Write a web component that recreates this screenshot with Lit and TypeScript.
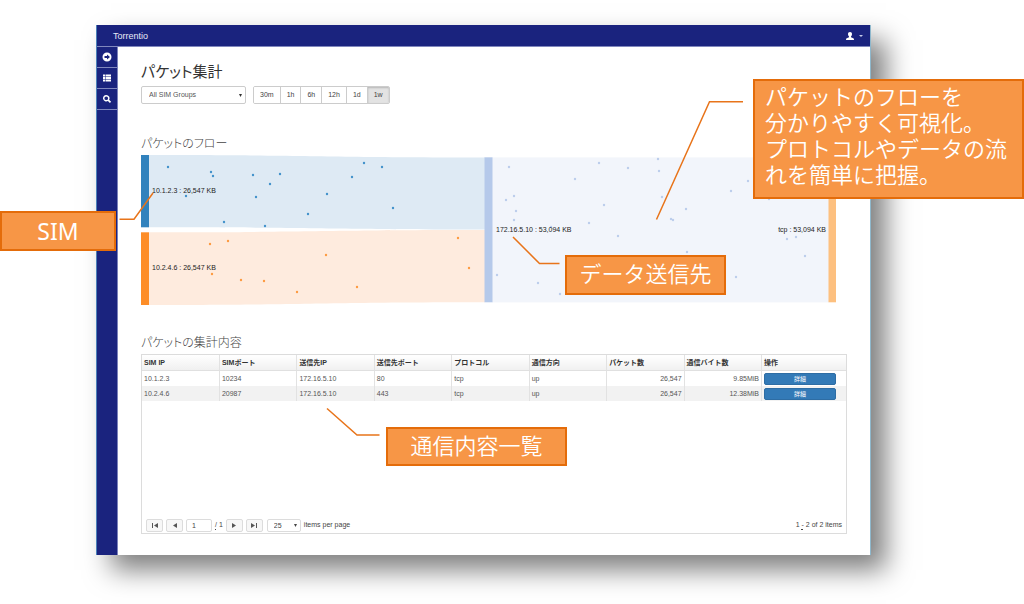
import { LitElement, html, svg, css } from "lit";
import { customElement, state } from "lit/decorators.js";

type Point = [number, number];

const PERIODS = ["30m", "1h", "6h", "12h", "1d", "1w"];

const COLUMNS = ["SIM IP", "SIMポート", "送信先IP", "送信先ポート", "プロトコル", "通信方向", "パケット数", "通信バイト数", "操作"];

const ROWS = [
  ["10.1.2.3", "10234", "172.16.5.10", "80", "tcp", "up", "26,547", "9.85MiB"],
  ["10.2.4.6", "20987", "172.16.5.10", "443", "tcp", "up", "26,547", "12.38MiB"],
];

const BLUE_PACKETS: Point[] = [
  [27, 12], [70, 17], [72, 21], [112, 20], [139, 19], [129, 29], [115, 42], [45, 41],
  [83, 67], [124, 71], [167, 59], [186, 39], [211, 22], [223, 8], [241, 12], [252, 53],
];
const ORANGE_PACKETS: Point[] = [
  [69, 89], [87, 86], [71, 119], [100, 125], [123, 126], [156, 137], [185, 100], [216, 132], [317, 83], [328, 113],
];
const TCP_PACKETS: Point[] = [
  [368, 12], [458, 8], [487, 13], [517, 4], [518, 16], [434, 24], [373, 41], [365, 45], [521, 42], [463, 50],
  [375, 56], [545, 54], [373, 65], [530, 64], [532, 65], [448, 68], [477, 81], [546, 97], [590, 36], [607, 26],
  [628, 44], [646, 84], [655, 82], [664, 101], [356, 120], [397, 128], [419, 139], [595, 122], [410, 72],
];

@customElement("packet-flow")
class PacketFlow extends LitElement {
  static styles = css`
    :host { display: block; }
    .chart { display: block; width: 100%; height: auto; }
    .label { font: 7px "Liberation Sans", sans-serif; fill: #222; }
    .end { text-anchor: end; }
    .link-blue { fill: #deeaf4; }
    .link-orange { fill: #feebde; }
    .link-tcp { fill: #f2f5fb; }
    .node-blue { fill: #3182bd; }
    .node-orange { fill: #fd8d27; }
    .node-dest { fill: #b5c9ea; }
    .node-tcp { fill: #fdc07f; }
    .dot-blue { fill: #4292cb; }
    .dot-orange { fill: #fd9a41; }
    .dot-tcp { fill: #bccdec; }
  `;

  private dots(points: Point[], cls: string) {
    return points.map(([x, y]) => svg`<circle class=${cls} cx=${x} cy=${y} r="1.2"></circle>`);
  }

  render() {
    return html`
      <svg class="chart" viewBox="0 0 706 150" role="img" aria-label="パケットのフロー">
        <path class="link-blue" d="M8 0C176 0 176 2.4 344 2.4V74.4C176 74.4 176 72.3 8 72.3Z"></path>
        <path class="link-orange" d="M8 77.3C176 77.3 176 75 344 75V147.3C176 147.3 176 150 8 150Z"></path>
        <rect class="link-tcp" x="351" y="2.4" width="337" height="145"></rect>
        <rect class="node-blue" x="0" y="0" width="8" height="72.3"></rect>
        <rect class="node-orange" x="0" y="77.3" width="8" height="72.7"></rect>
        <rect class="node-dest" x="343.5" y="2.3" width="8" height="145"></rect>
        <rect class="node-tcp" x="687.5" y="2.3" width="7.5" height="145"></rect>
        ${this.dots(BLUE_PACKETS, "dot-blue")}
        ${this.dots(ORANGE_PACKETS, "dot-orange")}
        ${this.dots(TCP_PACKETS, "dot-tcp")}
        <text class="label" x="11" y="38">10.1.2.3 : 26,547 KB</text>
        <text class="label" x="11" y="115">10.2.4.6 : 26,547 KB</text>
        <text class="label" x="355" y="77">172.16.5.10 : 53,094 KB</text>
        <text class="label end" x="685" y="77">tcp : 53,094 KB</text>
      </svg>
    `;
  }
}

@customElement("packet-grid")
class PacketGrid extends LitElement {
  static styles = css`
    :host {
      display: flex;
      flex-direction: column;
      min-height: 180px;
      box-sizing: border-box;
      border: 1px solid #dcdcdc;
      color: #555;
      font: 7px/14px "Liberation Sans", "Noto Sans CJK JP", sans-serif;
    }
    .grid { width: 100%; border-collapse: collapse; table-layout: fixed; }
    .col { width: 11%; }
    th, td { height: 15px; padding: 0 2px; text-align: left; border-right: 1px solid #e2e2e2; white-space: nowrap; }
    th:last-child, td:last-child { border-right: 0; }
    th { height: 15px; color: #333; border-bottom: 1px solid #e0e0e0; background: linear-gradient(#fff, #f0f0f0); }
    tbody tr:nth-child(even) { background: #f2f2f2; }
    .num { text-align: right; }
    .detail {
      display: block; width: 72px; height: 12px; margin-top: 1px; padding: 0;
      border: 1px solid #2e6da4; border-radius: 2px; background: #337ab7;
      color: #fff; font: 6px/10px "Noto Sans CJK JP", sans-serif;
    }
    .pager { display: flex; align-items: center; gap: 3px; margin-top: auto; padding: 0 4px 1px; color: #444; }
    .step, .page, .size {
      box-sizing: border-box; height: 13px; border: 1px solid #dcdcdc; border-radius: 2px;
      background: #fff; color: #444; font: 7px/11px "Liberation Sans", sans-serif;
    }
    .step { display: grid; place-items: center; width: 17px; padding: 0; background: #f7f7f7; }
    .glyph { width: 8px; height: 7px; fill: #555; }
    .page { width: 26px; padding: 0 5px; }
    .total { display: flex; gap: 2px; }
    .dotted { text-decoration: underline dotted 1px; text-underline-offset: 2px; }
    .pick { display: grid; align-items: center; margin-left: 1px; }
    .size { grid-area: 1 / 1; appearance: none; width: 34px; padding: 0 6px; }
    .arrow { grid-area: 1 / 1; justify-self: end; width: 3px; height: 3px; margin-right: 4px; fill: #444; pointer-events: none; }
    .range { margin-left: auto; }
  `;

  private step(label: string, path: string) {
    return html`<button class="step" type="button" aria-label=${label}>
      <svg class="glyph" viewBox="0 0 8 7"><path d=${path}></path></svg>
    </button>`;
  }

  render() {
    return html`
      <table class="grid">
        <colgroup>${COLUMNS.map((_, i) => (i < 8 ? html`<col class="col">` : html`<col>`))}</colgroup>
        <thead><tr>${COLUMNS.map((c) => html`<th scope="col">${c}</th>`)}</tr></thead>
        <tbody>
          ${ROWS.map((row) => html`<tr>
            ${row.map((v, i) => html`<td class=${i > 5 ? "num" : ""}>${v}</td>`)}
            <td><button class="detail" type="button">詳細</button></td>
          </tr>`)}
        </tbody>
      </table>
      <div class="pager">
        ${this.step("First page", "M1 1h1v5H1zM7 1v5L3 3.5z")}
        ${this.step("Previous page", "M6 1v5L2 3.5z")}
        <input class="page" aria-label="Page" value="1">
        <span class="total"><span class="dotted">/</span><span>1</span></span>
        ${this.step("Next page", "M2 1v5l4-2.500z")}
        ${this.step("Last page", "M6 1h1v5H6zM1 1v5l4-2.500z")}
        <span class="pick">
          <select class="size" id="size"><option>25</option><option>50</option></select>
          <svg class="arrow" viewBox="0 0 4 4"><path d="M0 0h4L2 4z"></path></svg>
        </span>
        <label for="size">items per page</label>
        <span class="range">1 <span class="dotted">-</span> 2 of 2 items</span>
      </div>
    `;
  }
}

@customElement("app-root")
class AppRoot extends LitElement {
  @state() private period = "1w";

  static styles = css`
    :host {
      display: block; position: relative; box-sizing: border-box; min-height: 100vh;
      padding: 25px 153px 49px 96px; overflow: hidden; background: #fff;
      font-family: "Liberation Sans", "Noto Sans CJK JP", sans-serif;
    }
    .window {
      display: grid; grid-template-columns: 21px 1fr; grid-template-rows: 22px 1fr;
      min-height: 530px; box-sizing: border-box; background: #fff;
      border-left: 1px solid #4a80b8; border-right: 1px solid #8fb8cc;
      box-shadow: 15px 15px 25px rgba(0, 0, 0, 0.5);
    }
    .bar {
      grid-column: 1 / -1; display: flex; align-items: center; justify-content: space-between;
      padding: 0 7px 0 16px; box-sizing: border-box; background: #1a237e; border-bottom: 1px solid #8087bd;
      color: #e8eaf6; font-size: 9px; line-height: 12px;
    }
    .brand { color: inherit; text-decoration: none; }
    .user { display: flex; align-items: center; gap: 5px; padding: 0; border: 0; background: none; }
    .person { width: 8px; height: 8px; fill: #fff; }
    .caret { width: 4px; height: 2px; fill: #c5cae9; }
    .side { background: #1a237e; border-right: 1px solid #7b82bb; }
    .nav { display: grid; place-items: center; height: 20px; border-bottom: 1px solid #8087bd; }
    .icon { width: 10px; height: 10px; fill: #fff; }
    .main { display: flex; flex-direction: column; padding: 14px 23px 21px; min-width: 0; }
    .title { margin: 0; font: 400 15px/20px "Noto Sans CJK JP", sans-serif; font-feature-settings: "palt"; color: #333; }
    .section { margin: 0; font: 300 12px/18px "Noto Sans CJK JP", sans-serif; font-feature-settings: "palt"; color: #444; }
    .tools { display: flex; gap: 7px; margin: 5px 0 30px; }
    .pick { display: grid; align-items: center; }
    .groups {
      grid-area: 1 / 1; appearance: none; box-sizing: border-box; width: 105px; height: 18px; padding: 0 7px;
      border: 1px solid #ccc; border-radius: 2px; background: #fff; color: #555; font: 7px/16px "Liberation Sans", sans-serif;
    }
    .arrow { grid-area: 1 / 1; justify-self: end; width: 3px; height: 3px; margin-right: 4px; fill: #333; pointer-events: none; }
    .periods { display: flex; border: 1px solid #ccc; border-radius: 2px; overflow: hidden; }
    .period {
      height: 16px; padding: 0 6px; border: 0; border-right: 1px solid #ccc; background: #fff;
      color: #444; font: 7px/16px "Liberation Sans", sans-serif;
    }
    .period:last-child { border-right: 0; }
    .active { background: #e3e3e3; box-shadow: inset 0 1px 2px rgba(0, 0, 0, 0.2); }
    .flow { margin: 3px 0 28px; }
    .table { flex: 1; margin-top: 3px; }
    .lines { position: absolute; left: 0; top: 0; width: 1024px; height: 604px; pointer-events: none; }
    .line { fill: none; stroke: #e8741a; stroke-width: 1.5; }
    .note {
      position: absolute; display: grid; align-items: center; box-sizing: border-box; margin: 0;
      border: 2px solid #e46c0a; background: #f79646; color: #fff;
      font: 350 22px/26px "Liberation Sans", "Noto Sans CJK JP", sans-serif;
    }
    .center { justify-items: center; }
    .note-sim { left: 0; top: 211px; width: 116px; height: 40px; font: 400 23px/27px "Noto Sans", sans-serif; }
    .note-flow { left: 753px; top: 79px; width: 271px; height: 120px; padding: 0 10px 4px; }
    .note-dest { left: 565px; top: 255px; width: 161px; height: 40px; }
    .note-list { left: 386px; top: 427px; width: 181px; height: 39px; }
  `;

  render() {
    return html`
      <div class="window">
        <header class="bar">
          <a class="brand" href="#">Torrentio</a>
          <button class="user" type="button" aria-label="User menu">
            <svg class="person" viewBox="0 0 16 16"><path d="M8 0c2.600 0 4 1.800 4 4.500 0 2-.8 3.600-2 4.500v1.500l4.500 2c1 .5 1.500 1.300 1.500 3.500H0c0-2.200.5-3 1.500-3.500l4.500-2V9C4.800 8.100 4 6.500 4 4.500 4 1.800 5.400 0 8 0z"></path></svg>
            <svg class="caret" viewBox="0 0 4 2"><path d="M0 0h4L2 2z"></path></svg>
          </button>
        </header>
        <nav class="side">
          <a class="nav" href="#" aria-label="Open">
            <svg class="icon" viewBox="0 0 20 20"><path fill-rule="evenodd" d="M10 1a9 9 0 1 0 0 18 9 9 0 0 0 0-18zM10 5l6 5-6 5v-3H5V8h5z"></path></svg>
          </a>
          <a class="nav" href="#" aria-label="List">
            <svg class="icon" viewBox="0 0 20 20"><path d="M2 3h4v4H2zM7 3h11v4H7zM2 8h4v4H2zM7 8h11v4H7zM2 13h4v4H2zM7 13h11v4H7z"></path></svg>
          </a>
          <a class="nav" href="#" aria-label="Search">
            <svg class="icon" viewBox="0 0 20 20"><path fill-rule="evenodd" d="M8.500 2a6.500 6.500 0 1 0 3.300 12.100l4 4 2.400-2.400-4-4A6.500 6.500 0 0 0 8.500 2zm0 2.800a3.700 3.700 0 1 1 0 7.400 3.700 3.700 0 0 1 0-7.400z"></path></svg>
          </a>
        </nav>
        <main class="main">
          <h1 class="title">パケット集計</h1>
          <div class="tools">
            <span class="pick">
              <select class="groups" aria-label="SIM group"><option>All SIM Groups</option></select>
              <svg class="arrow" viewBox="0 0 4 4"><path d="M0 0h4L2 4z"></path></svg>
            </span>
            <div class="periods" role="group" aria-label="Period">
              ${PERIODS.map((p) => html`<button type="button" class="period ${p === this.period ? "active" : ""}"
                aria-pressed=${p === this.period} @click=${() => (this.period = p)}>${p}</button>`)}
            </div>
          </div>
          <h2 class="section">パケットのフロー</h2>
          <packet-flow class="flow"></packet-flow>
          <h2 class="section">パケットの集計内容</h2>
          <packet-grid class="table"></packet-grid>
        </main>
      </div>
      <svg class="lines" viewBox="0 0 1024 604" aria-hidden="true">
        <path class="line" d="M119.500 219.300H134L153 193"></path>
        <path class="line" d="M743 101.800H709.500L656.500 219.500"></path>
        <path class="line" d="M559.500 263.500H539.500L513 237"></path>
        <path class="line" d="M379.500 435H357L327 408.500"></path>
      </svg>
      <p class="note center note-sim">SIM</p>
      <p class="note note-flow"><span>パケットのフローを<br>分かりやすく可視化。<br>プロトコルやデータの流れを簡単に把握。</span></p>
      <p class="note center note-dest">データ送信先</p>
      <p class="note center note-list">通信内容一覧</p>
    `;
  }
}
